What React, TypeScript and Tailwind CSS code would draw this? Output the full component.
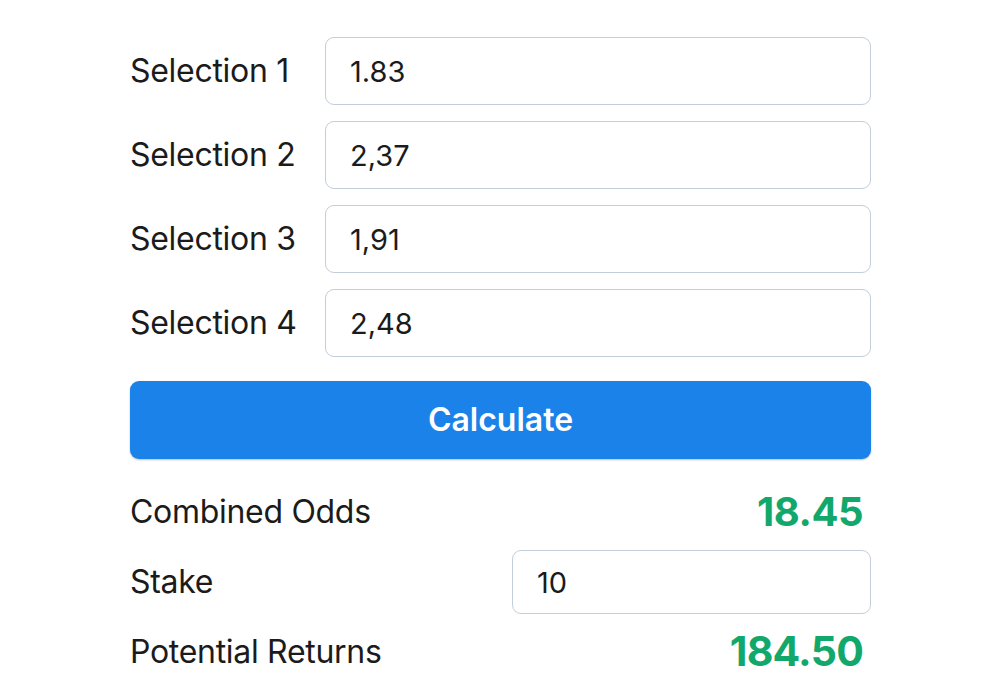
const selections = [
  { label: "Selection 1", value: "1.83" },
  { label: "Selection 2", value: "2,37" },
  { label: "Selection 3", value: "1,91" },
  { label: "Selection 4", value: "2,48" },
];

const App = () => {
  return (
    <div className="min-h-[700px] bg-white font-['Inter',sans-serif] text-[#1b1b1b]">
      <div className="mx-auto flex w-[742px] flex-col pt-[37px] pl-[1px]">
        <div className="flex flex-col gap-4">
          {selections.map((s) => (
            <div key={s.label} className="flex h-[68px] items-center">
              <span className="w-[195px] text-[32px] tracking-[-0.3px]">{s.label}</span>
              <input
                defaultValue={s.value}
                className="h-full flex-1 rounded-[9px] border-[1.5px] border-[#c3cedb] px-6 text-[29px] outline-none"
              />
            </div>
          ))}
        </div>

        <button className="mt-6 h-[78px] w-full rounded-[9px] bg-[#1a82e8] text-[32px] font-semibold text-white shadow-[0_1px_2px_rgba(0,0,0,0.25)]">
          Calculate
        </button>

        <div className="mt-[23px] flex flex-col gap-2">
          <div className="flex h-[60px] items-center justify-between pr-2">
            <span className="text-[32px] tracking-[-0.3px]">Combined Odds</span>
            <span className="text-[40px] font-bold tracking-[-0.5px] text-[#12a86b]">18.45</span>
          </div>
          <div className="flex h-[64px] items-center">
            <span className="flex-1 text-[32px] tracking-[-0.3px]">Stake</span>
            <input
              defaultValue="10"
              className="h-full w-[359px] rounded-[9px] border-[1.5px] border-[#c3cedb] px-6 text-[29px] outline-none"
            />
          </div>
          <div className="flex h-[60px] items-center justify-between pr-2">
            <span className="text-[32px] tracking-[-0.3px]">Potential Returns</span>
            <span className="text-[41px] font-bold tracking-[-0.8px] text-[#12a86b]">184.50</span>
          </div>
        </div>
      </div>
    </div>
  );
};

export default App;
